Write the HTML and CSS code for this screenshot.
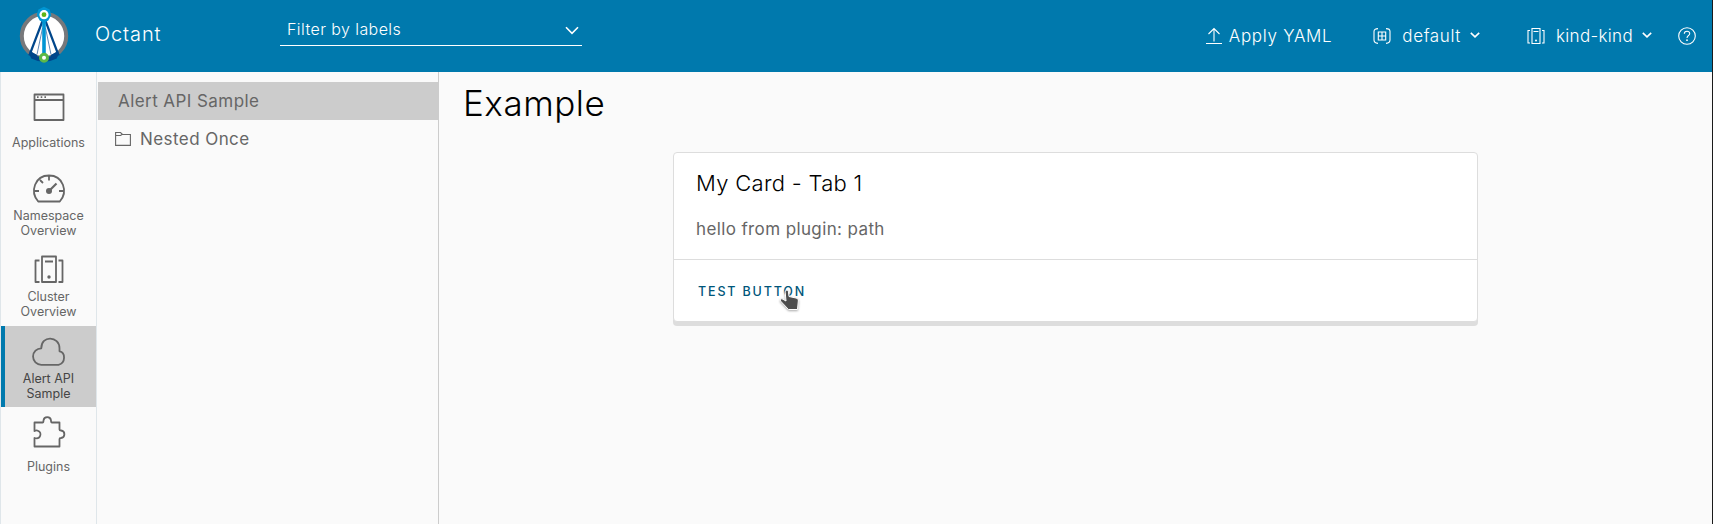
FILE: index.html
```
<!DOCTYPE html>
<html lang="en">
<head>
<meta charset="utf-8">
<title>Octant</title>
<link rel="stylesheet" href="styles.css">
</head>
<body>
<div class="app">
  <header class="header">
    <svg class="logo" viewBox="0 0 52 62">
      <circle cx="26" cy="32" r="22.2" fill="#fff" stroke="#77787b" stroke-width="4"/>
      <path d="M11 49Q26 57 41 49L38.800 54.500Q26 61 13.200 54.500Z" fill="#00468b"/>
      <path d="M24.500 17L12.300 49M27.500 17L39.700 49" fill="none" stroke="#00468b" stroke-width="2.200"/>
      <path d="M24.500 24L19 50.500M27.500 24L33 50.500" fill="none" stroke="#3b6ba5" stroke-width=".8"/>
      <path d="M12 47l-1.800 4 8 4 1-4zM40 47l1.800 4-8 4-1-4z" fill="#00468b"/>
      <path d="M26 14V54" stroke="#0095d3" stroke-width="3.600"/>
      <path d="M26 2.800l5.600 2.600 1.700 5.600-3 5.600-4.300 2.300-4.300-2.300-3-5.600 1.700-5.600z" fill="#0095d3"/>
      <circle cx="26" cy="10.700" r="4.600" fill="#fff"/><circle cx="26" cy="10.700" r="2.400" fill="#60b515"/>
      <circle cx="26" cy="53.700" r="3.500" fill="#fff" stroke="#5cb847" stroke-width="3"/>
    </svg>
    <span class="brand">Octant</span>
    <div class="filter">
      <span class="filter-text">Filter by labels</span>
      <svg class="filter-caret" viewBox="0 0 14 9"><path d="M1 1.200L7 7.300 13 1.200" class="line-strong"/></svg>
    </div>
    <div class="tools">
      <div class="tool apply">
        <svg class="tool-icon" viewBox="0 0 18 18"><path d="M9 14.500V2M3.500 7L9 1.600 14.500 7M1 16.500H17" class="line"/></svg>
        <span class="tool-text yaml">Apply YAML</span>
      </div>
      <div class="tool namespace">
        <svg class="tool-icon" viewBox="0 0 18 18"><path d="M5 1.600Q1 1.600 1 4.500V13Q1 16 5 16.400M13 1.600Q17 1.600 17 4.500V13Q17 16 13 16.400M5.300 5H12.700V13H5.300ZM9 5V13M5.300 9H12.700" class="line"/></svg>
        <span class="tool-text">default</span>
        <svg class="caret" viewBox="0 0 10 6"><path d="M.8.9L5 4.900 9.200.9" class="line-strong"/></svg>
      </div>
      <div class="tool context">
        <svg class="tool-icon" viewBox="0 0 18 18"><path d="M5 1.500H13V16.500H5ZM3 3.500H1V16H3M15 3.500H17V16H15M6.500 4.500H11.500" class="line"/><circle cx="9" cy="13.500" r="1" fill="#fff"/></svg>
        <span class="tool-text">kind-kind</span>
        <svg class="caret" viewBox="0 0 10 6"><path d="M.8.9L5 4.900 9.200.9" class="line-strong"/></svg>
      </div>
      <svg class="help" viewBox="0 0 18 18"><circle cx="9" cy="9" r="8.300" class="line"/><path d="M6.300 6.800C6.300 3.400 11.900 3.500 11.700 6.700C11.600 8.500 9 8.500 9 10.900" class="line"/><circle cx="9" cy="13.200" r=".9" fill="#fff"/></svg>
    </div>
  </header>
  <div class="body">
    <nav class="rail">
      <a class="rail-item">
        <svg class="rail-icon" viewBox="0 0 36 36"><path d="M3.500 5.500H32.500V31H3.500ZM3.500 11H32.500" class="ink"/><path d="M6 8.200h1.600M9.700 8.200h1.600M13.400 8.200h1.600" class="ink"/></svg>
        <span class="rail-text">Applications</span>
      </a>
      <a class="rail-item">
        <svg class="rail-icon" viewBox="0 0 36 36"><path d="M7.200 31.500C-1.500 21.500 4 5.500 18 5.500S37.500 21.500 28.800 31.500ZM18 6V10.500M9 10L12 13M3.500 21H8M28 21H32.500" class="ink"/><path d="M18 21L25.500 13.500" class="ink thick"/><circle cx="18" cy="21" r="3" fill="#666"/></svg>
        <span class="rail-text">Namespace Overview</span>
      </a>
      <a class="rail-item">
        <svg class="rail-icon" viewBox="0 0 36 36"><path d="M11 5.500H25V31H11ZM8.500 9.500H4.500V31H8.500M27.500 9.500H31.500V31H27.500M14 10.500H22" class="ink"/><circle cx="18" cy="26" r="1.700" fill="#666"/></svg>
        <span class="rail-text">Cluster Overview</span>
      </a>
      <a class="rail-item active">
        <svg class="rail-icon" viewBox="0 0 36 36"><path d="M10.300 31.800A7.700 7.700 0 0 1 10.300 15.300C10 1.800 28.500 2.800 28.500 15.300V18.300C34.500 19.300 35 29.800 27.500 31.800Z" class="ink"/></svg>
        <span class="rail-text">Alert API Sample</span>
      </a>
      <a class="rail-item">
        <svg class="rail-icon" viewBox="0 0 36 36"><path d="M3.500 8.500H11.500C12.500 8.500 12.500 7.500 12.500 6.500C13 2 19.500 2 20 6.500C20 7.500 20 8.500 21 8.500H28.500V15.500C28.500 16.500 29.500 16.500 30 16.500C34.500 17 34.500 23.500 30 24C29.500 24 28.500 24 28.500 25V32.500H3.500V24C9.500 26 11.500 18.500 7 16.800C5.800 16.200 4.500 16.500 3.500 17Z" class="ink"/></svg>
        <span class="rail-text">Plugins</span>
      </a>
    </nav>
    <nav class="side">
      <a class="side-item selected">Alert API Sample</a>
      <a class="side-item nested"><svg class="folder" viewBox="0 0 16 16"><path d="M.6 14.400V1.500H5.500L7.500 3.500H15.400V14.400ZM.6 4.500H5.500L7 3.500" fill="none" stroke="#666" stroke-width="1.100"/></svg>Nested Once</a>
    </nav>
    <main class="main">
      <h1 class="title">Example</h1>
      <section class="card">
        <div class="card-body">
          <h2 class="card-title">My Card - Tab 1</h2>
          <p class="card-text">hello from plugin: path</p>
        </div>
        <div class="card-footer">
          <button class="button">TEST BUTTON
            <svg class="pointer" viewBox="0 0 22 24"><path d="M6.200 4.200C6.200 1.500 9.300 1.500 9.500 4L10 8.500L17 10C19 10.500 19.500 11.500 19.300 13L18.500 21.500H9.500L1.500 13C.6 11.500 2.200 10.200 3.800 11.200L7 13Z" fill="#4d4d4d" stroke="#fff" stroke-width="1"/></svg>
          </button>
        </div>
      </section>
    </main>
  </div>
</div>
</body>
</html>
```
FILE: styles.css
```
* { box-sizing: border-box; }
body {
  margin: 0;
  height: 524px;
  overflow: hidden;
  background: #fafafa;
  color: #666;
  font: 400 17px/24px Inter, "Open Sans", sans-serif;
}
svg { display: block; flex: none; overflow: visible; }
.app { height: 524px; display: flex; flex-direction: column; border-right: 1px solid #1b1b1b; }
.line { fill: none; stroke: #fff; stroke-width: 1.1; }
.line-strong { fill: none; stroke: #fff; stroke-width: 1.6; }
.ink { fill: none; stroke: #666; stroke-width: 1.8; stroke-linejoin: round; }
.thick { stroke-width: 2.2; }

.header { height: 72px; flex: none; display: flex; background: #0079ad; color: #fff; font-weight: 300; }
.logo { width: 52px; height: 62px; margin: 4px 0 0 18px; }
.brand { width: 184px; margin: 22px 0 0 25px; font-size: 20px; letter-spacing: .86px; }
.filter {
  width: 302px;
  height: 29px;
  margin: 17px 0 0 1px;
  padding: 0 3px 4px 7px;
  display: flex;
  align-items: center;
  justify-content: space-between;
  border-bottom: 1px solid #fff;
}
.filter-text { margin-top: -1px; font-size: 16px; letter-spacing: .42px; }
.filter-caret { width: 14px; height: 9px; margin-top: 3px; }
.tools { margin-left: auto; height: 72px; display: flex; align-items: center; }
.tool { display: flex; align-items: center; }
.tool-icon { width: 18px; height: 18px; }
.tool-text { margin: -1px 0 0 11px; letter-spacing: .6px; }
.yaml { margin-left: 6px; letter-spacing: .7px; }
.namespace { margin-left: 41px; }
.context { margin-left: 47px; }
.context .tool-text { letter-spacing: .33px; }
.caret { width: 10px; height: 6px; margin: -2px 0 0 9px; }
.help { width: 18px; height: 18px; margin: 0 16px 0 26px; }

.body { flex: 1; display: flex; min-height: 0; }
.rail { width: 97px; padding-top: 10px; border: solid #dfe6ea; border-width: 0 1px; }
.rail-item { height: 81.2px; padding-top: 7px; display: flex; flex-direction: column; align-items: center; }
.rail-icon { width: 36px; height: 36px; }
.rail-text {
  width: 84px;
  height: 30px;
  margin-top: 2px;
  display: flex;
  align-items: center;
  justify-content: center;
  text-align: center;
  font-size: 12.5px;
  line-height: 15px;
}
.active { background: #ccc; box-shadow: inset 4px 0 #0079ad; color: #454545; }
.side { width: 342px; padding: 10px 0 0 1px; border-right: 1px solid #ccc; }
.side-item { height: 38px; padding: 0 0 1px 20px; display: flex; align-items: center; letter-spacing: .43px; }
.selected { background: #ccc; }
.nested { padding-left: 17px; }
.folder { width: 16px; height: 16px; margin: 1px 9px 0 0; }

.main { flex: 1; padding: 11px 0 0 24px; color: #000; }
.title { height: 40px; margin: 0; font-size: 35px; line-height: 40px; font-weight: 300; letter-spacing: .5px; }
.card {
  width: 805px;
  margin: 29px 0 0 210px;
  background: #fff;
  border: 1px solid #ddd;
  border-radius: 4px;
  box-shadow: 0 4px #ddd;
}
.card-body { height: 107px; padding: 17px 22px 0; border-bottom: 1px solid #ddd; }
.card-title { margin: 0; font-size: 22px; line-height: 26px; font-weight: 300; letter-spacing: .3px; }
.card-text { margin: 21px 0 0; color: #666; letter-spacing: .38px; }
.card-footer { height: 61px; padding: 18px 24px 0 24px; }
.button {
  position: relative;
  padding: 0;
  border: 0;
  background: none;
  color: #00567a;
  font: 500 12.5px/24px Inter, "Open Sans", sans-serif;
  letter-spacing: 1.85px;
}
.pointer { position: absolute; left: 81px; top: 8px; width: 22px; height: 24px; filter: drop-shadow(0 1px 1px #aaa); }
```
